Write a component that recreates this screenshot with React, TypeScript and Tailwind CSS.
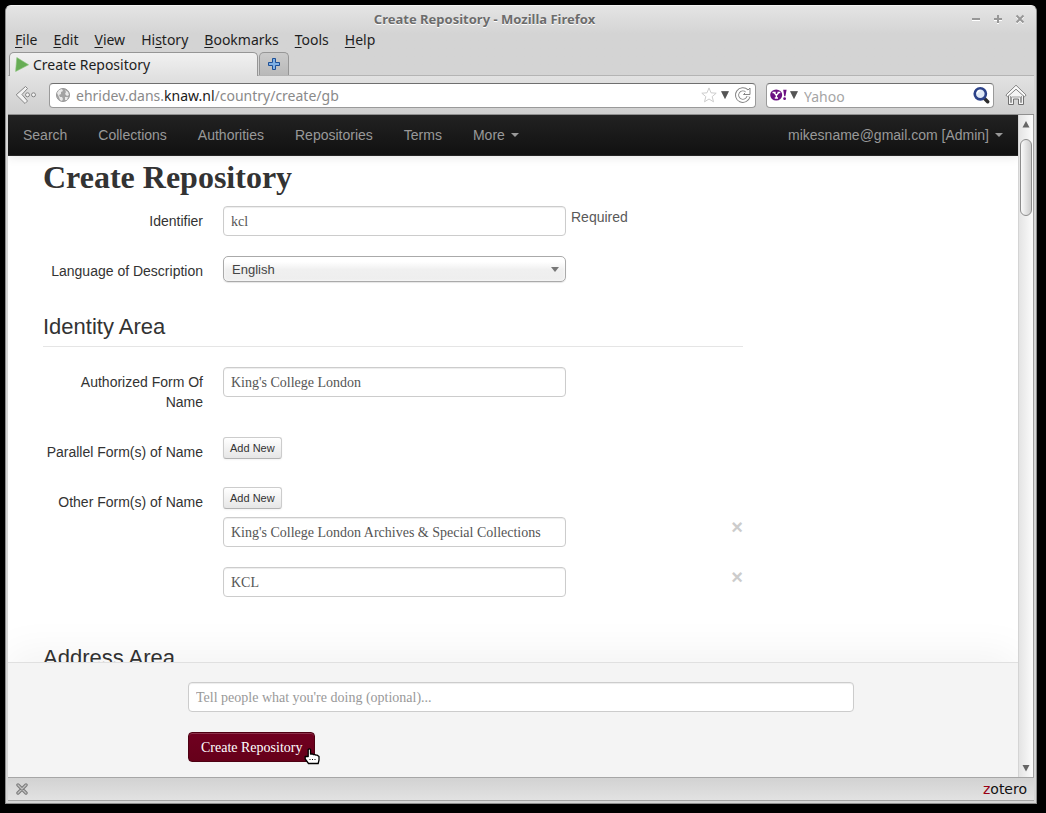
import type { ReactNode } from 'react';

const UI = "font-['Noto_Sans',sans-serif]";
const SANS = "font-['Liberation_Sans',Arial,sans-serif]";
const SERIF = "font-['Liberation_Serif','Times_New_Roman',serif]";

const fieldClass =
  "h-[30px] rounded-[4px] border border-[#ccc] bg-white px-[7px] pt-0.5 text-[14px] leading-5 text-[#555] shadow-[inset_0_1px_1px_rgba(0,0,0,0.075)] outline-none " +
  SERIF;

function Caret() {
  return (
    <svg width="8" height="4" viewBox="0 0 8 4" className="ml-1.5 shrink-0" aria-hidden="true">
      <path d="M0 0h8L4 4z" fill="#999" />
    </svg>
  );
}

function WindowButton({ label, d }: { label: string; d: string }) {
  return (
    <button type="button" aria-label={label} className="block">
      <svg width="10" height="10" viewBox="0 0 10 10" aria-hidden="true">
        <path d={d} stroke="#fff" strokeWidth="2" fill="none" transform="translate(0 1)" />
        <path d={d} stroke="#979797" strokeWidth="2" fill="none" />
      </svg>
    </button>
  );
}

function TitleBar() {
  return (
    <div className="grid h-6 shrink-0 grid-cols-[1fr_auto_1fr] items-center pl-0 pr-[9px] pt-0.5">
      <span />
      <span className={`pr-16 text-[13px] font-bold leading-5 text-[#6c6c6c] [text-shadow:0_1px_0_#fff] ${UI}`}>
        Create Repository - Mozilla Firefox
      </span>
      <div className="flex justify-end gap-3">
        <WindowButton label="Minimize" d="M1 5h8" />
        <WindowButton label="Maximize" d="M1 5h8M5 1v8" />
        <WindowButton label="Close" d="M1.5 1.5l7 7M8.500 1.500l-7 7" />
      </div>
    </div>
  );
}

const menus: [string, string, string][] = [
  ['', 'F', 'ile'],
  ['', 'E', 'dit'],
  ['', 'V', 'iew'],
  ['Hi', 's', 'tory'],
  ['', 'B', 'ookmarks'],
  ['', 'T', 'ools'],
  ['', 'H', 'elp'],
];

function MenuBar() {
  return (
    <div className={`flex h-[22px] shrink-0 items-center gap-4 px-[7px] pb-0.5 text-[14px] leading-5 text-[#1e1e1e] ${UI}`}>
      {menus.map(([before, key, after]) => (
        <button type="button" key={before + key + after}>
          {before}
          <span className="underline underline-offset-2">{key}</span>
          {after}
        </button>
      ))}
    </div>
  );
}

function TabStrip() {
  return (
    <div className="flex h-6 shrink-0 gap-px border-b border-[#b4b4b4] pl-px">
      <button
        type="button"
        className={`-mb-px flex w-[249px] items-center gap-1 rounded-t-[5px] border border-b-0 border-[#969696] bg-linear-to-b from-[#f1f1f1] to-[#e2e2e2] pl-[5px] text-[14px] leading-5 text-[#1e1e1e] ${UI}`}
      >
        <svg width="14" height="16" viewBox="0 0 14 16" className="shrink-0" aria-hidden="true">
          <path d="M1.800 .5L13.600 7.800L.6 14.500z" fill="#67ad55" stroke="#8cc47c" strokeWidth=".6" />
        </svg>
        Create Repository
      </button>
      <button
        type="button"
        aria-label="Open a new tab"
        className="flex w-[30px] items-center justify-center rounded-t-[5px] border border-b-0 border-[#969696] bg-linear-to-b from-[#cbcbcb] to-[#b9b9b9]"
      >
        <svg width="14" height="14" viewBox="0 0 14 14" aria-hidden="true">
          <path d="M5.500 1.500h3v4h4v3h-4v4h-3v-4h-4v-3h4z" fill="#7fb0e4" stroke="#1d4f96" />
        </svg>
      </button>
    </div>
  );
}

function DropArrow() {
  return (
    <svg width="8" height="8" viewBox="0 0 8 8" className="shrink-0" aria-hidden="true">
      <path d="M.5.500h7L4 7.500z" fill="#555" stroke="#444" strokeWidth=".6" />
    </svg>
  );
}

function Toolbar() {
  return (
    <div className={`flex h-[39px] shrink-0 items-center border-b border-[#8f8f8f] bg-linear-to-b from-[#e2e2e2] to-[#cfcfcf] pl-[7px] pr-[7px] text-[14px] ${UI}`}>
      <button type="button" aria-label="Back" className="mr-3 shrink-0">
        <svg width="22" height="20" viewBox="0 0 22 20" className="block" aria-hidden="true">
          <path d="M10.500 1.500l2 2L7 9.500l5.500 6.500-2.500 2.500L1.200 9.800z" fill="#f2f2f2" stroke="#858585" />
          <circle cx="12.500" cy="9.800" r="2" fill="#f2f2f2" stroke="#858585" />
          <circle cx="18.500" cy="9.800" r="2" fill="#f2f2f2" stroke="#858585" />
        </svg>
      </button>
      <div className="flex h-[25px] min-w-0 flex-1 items-center rounded-[4px] border border-[#9a9a9a] border-t-[#6f6f6f] bg-white pl-1.5 pr-1">
        <svg width="14" height="14" viewBox="0 0 14 14" className="mr-1.5 shrink-0" aria-hidden="true">
          <circle cx="7" cy="7" r="6.500" fill="#a3a3a3" stroke="#979797" />
          <path d="M1 5l2-3 3-1 1 2-2 1v2l-2 1 1 2 2 0 1 2-1 2-2-1-1-3zM9 2l3 2 1 3-2 1-2-2 1-2zM9 9l3 0-1 3-2 0z" fill="#e9e9e9" />
        </svg>
        <div className="min-w-0 flex-1 truncate pt-0.5 leading-5 text-[#8a8a8a]">
          ehridev.dans.<span className="text-[#1a1a1a]">knaw.nl</span>/country/create/gb
        </div>
        <button type="button" aria-label="Bookmark this page" className="mr-1 shrink-0">
          <svg width="16" height="16" viewBox="0 0 16 16" className="block" aria-hidden="true">
            <path d="M8 .9l2 4.900 5.200.4-4 3.400 1.300 5.200L8 12l-4.500 2.800 1.300-5.200-4-3.400L6 5.800z" fill="#fff" stroke="#cdcdcd" />
          </svg>
        </button>
        <button type="button" aria-label="Show history" className="mr-1.5 shrink-0">
          <DropArrow />
        </button>
        <button type="button" aria-label="Reload" className="shrink-0">
          <svg width="16" height="16" viewBox="0 0 16 16" className="block" aria-hidden="true">
            <path d="M13.500 9.500A5.800 5.800 0 1 1 12 4" fill="none" stroke="#858585" strokeWidth="4" />
            <path d="M8.500 7.500h6.500V1z" fill="#fff" stroke="#858585" />
            <path d="M13.500 9.500A5.800 5.800 0 1 1 12 4l-1 2.500" fill="none" stroke="#fff" strokeWidth="2.200" />
          </svg>
        </button>
      </div>
      <div className="ml-[10px] flex h-[25px] w-[228px] shrink-0 items-center rounded-[4px] border border-[#9a9a9a] border-t-[#6f6f6f] bg-white pl-[3px] pr-[3px]">
        <svg width="18" height="14" viewBox="0 0 18 14" className="mr-0.5 shrink-0" aria-hidden="true">
          <ellipse cx="6.200" cy="7" rx="6" ry="5.500" fill="#6b0f82" />
          <path d="M2.500 4.500h3.200M7.500 4.500h2.800M4 4.500l2.400 3 2.400-3M6.400 7.500v2.500M4.800 10h3.200" stroke="#fff" strokeWidth="1.300" fill="none" />
          <path d="M13.200 1.800h3.400l-1.200 6.400h-1.200z" fill="#6b0f82" />
          <circle cx="14.600" cy="10.700" r="1.400" fill="#6b0f82" />
        </svg>
        <DropArrow />
        <input
          aria-label="Search using Yahoo"
          placeholder="Yahoo"
          className="ml-1 h-[22px] min-w-0 flex-1 px-0.5 pt-0.5 leading-5 outline-none placeholder:text-[#a5a5a5]"
        />
        <button type="button" aria-label="Search" className="shrink-0">
          <svg width="18" height="18" viewBox="0 0 18 18" className="block" aria-hidden="true">
            <path d="M12.500 12.500l3.200 3.200" stroke="#2c2c2c" strokeWidth="3.400" strokeLinecap="round" />
            <circle cx="8.300" cy="7.800" r="5.600" fill="#dfe8f6" stroke="#2c4289" strokeWidth="2.600" />
            <path d="M5.300 7.500a3 3 0 0 1 3-3" fill="none" stroke="#fff" strokeWidth="1.300" />
          </svg>
        </button>
      </div>
      <button type="button" aria-label="Home" className="ml-[11px] shrink-0">
        <svg width="22" height="22" viewBox="0 0 22 22" className="block" aria-hidden="true">
          <path d="M3.500 11v9.500h5v-5.500h5v5.500h5V11L11 4.500z" fill="#f4f4f4" stroke="#707070" />
          <path d="M5.500 12v6.500h1V13h9v5.500h1V12" fill="none" stroke="#9d9d9d" />
          <path d="M11 1.200L.9 11l1.600 1.800L11 5.200l8.500 7.600L21.100 11z" fill="#fafafa" stroke="#858585" />
        </svg>
      </button>
    </div>
  );
}

const links = ['Search', 'Collections', 'Authorities', 'Repositories', 'Terms'];

function NavBar() {
  return (
    <nav
      className={`relative z-10 flex h-[41px] shrink-0 items-center border-b border-[#252525] bg-linear-to-b from-[#222] to-[#111] px-[15px] text-[14px] leading-5 text-[#999] shadow-[0_1px_10px_rgba(0,0,0,0.1)] ${SANS}`}
    >
      <div className="flex gap-[31px]">
        {links.map((l) => (
          <a href="#" key={l}>
            {l}
          </a>
        ))}
        <a href="#" className="flex items-center">
          More
          <Caret />
        </a>
      </div>
      <a href="#" className="ml-auto flex items-center">
        mikesname@gmail.com [Admin]
        <Caret />
      </a>
    </nav>
  );
}

function Group({ label, htmlFor, children }: { label: string; htmlFor: string; children: ReactNode }) {
  return (
    <div className="mb-5 flex gap-5">
      <label htmlFor={htmlFor} className="w-40 shrink-0 py-[5px] text-right">
        {label}
      </label>
      <div className="min-w-0 flex-1">{children}</div>
    </div>
  );
}

function Legend({ children }: { children: ReactNode }) {
  return <h2 className="mb-5 border-b border-[#e5e5e5] pt-0.5 text-[22px] leading-[38px]">{children}</h2>;
}

function AddNew({ id }: { id: string }) {
  return (
    <button
      id={id}
      type="button"
      className="block h-[22px] rounded-[3px] border border-[#ccc] border-b-[#b3b3b3] bg-linear-to-b from-white to-[#e6e6e6] px-1.5 text-[11px] leading-5 text-[#333] shadow-[0_1px_2px_rgba(0,0,0,0.05)]"
    >
      Add New
    </button>
  );
}

const otherNames = ["King's College London Archives & Special Collections", 'KCL'];

function RepositoryForm() {
  return (
    <form className={`w-full max-w-[735px] pl-[35px] text-[14px] leading-5 text-[#333] ${SANS}`}>
      <h1 className={`mb-[9px] pt-px text-[32px] font-bold leading-[40px] ${SERIF}`}>Create Repository</h1>
      <Group label="Identifier" htmlFor="identifier">
        <div className="flex gap-[5px]">
          <input id="identifier" defaultValue="kcl" className={`w-[343px] ${fieldClass}`} />
          <span className="pt-px text-[#595959]">Required</span>
        </div>
      </Group>
      <Group label="Language of Description" htmlFor="language">
        <div className="relative w-[343px]">
          <select
            id="language"
            className="block h-[26px] w-full appearance-none rounded-[5px] border border-[#aaa] bg-linear-to-b from-white from-20% via-[#f0f0f0] via-52% to-[#eee] px-2 pt-0.5 text-[13px] leading-[22px] text-[#444] shadow-[inset_0_0_3px_#fff,0_1px_1px_rgba(0,0,0,0.1)] outline-none"
          >
            <option>English</option>
          </select>
          <svg width="8" height="5" viewBox="0 0 8 5" className="pointer-events-none absolute right-[7px] top-[11px]" aria-hidden="true">
            <path d="M0 0h8L4 5z" fill="#777" />
          </svg>
        </div>
      </Group>
      <Legend>Identity Area</Legend>
      <Group label="Authorized Form Of Name" htmlFor="authorized">
        <input id="authorized" defaultValue="King's College London" className={`block w-[343px] ${fieldClass}`} />
      </Group>
      <Group label="Parallel Form(s) of Name" htmlFor="parallel">
        <AddNew id="parallel" />
      </Group>
      <Group label="Other Form(s) of Name" htmlFor="other">
        <AddNew id="other" />
        <div className="mt-2">
          {otherNames.map((name) => (
            <div key={name} className="mb-5 flex justify-between">
              <input aria-label="Other form of name" defaultValue={name} className={`w-[343px] ${fieldClass}`} />
              <button type="button" aria-label={`Remove ${name}`} className="h-5 text-[20px] font-bold leading-5 text-[#ccc]">
                ×
              </button>
            </div>
          ))}
        </div>
      </Group>
      <Legend>Address Area</Legend>
    </form>
  );
}

function HandCursor() {
  return (
    <svg width="17" height="17" viewBox="0 0 17 17" className="pointer-events-none absolute -bottom-[3px] -right-1.5" aria-hidden="true">
      <path
        d="M4.200 1.500q1.300-1.200 2.300 0V6h2l1 .6h1.500l1 .6h1.300l1.700 1.300V12l-.8 3.500H4.500L1.200 11V8.500h3z"
        fill="#fff"
        stroke="#000"
        strokeWidth="1.300"
        strokeLinejoin="round"
      />
      <path d="M5.500 11.500h1M8 11.500h1M10.500 11.500h1" stroke="#000" />
    </svg>
  );
}

function SubmitPanel() {
  return (
    <div className="relative z-10 shrink-0 border-t border-[#e0e0e0] bg-[#f4f4f4] pb-[15px] pl-[180px] pr-4 pt-[19px] shadow-[0_-10px_40px_rgba(0,0,0,0.05)]">
      <input
        aria-label="Log message"
        placeholder="Tell people what you're doing (optional)..."
        className={`block w-full max-w-[666px] placeholder:text-[#999] ${fieldClass}`}
      />
      <div className="relative mt-5 w-fit">
        <button
          type="button"
          className={`block h-[30px] rounded-[4px] border border-[#4d0012] bg-linear-to-b from-[#700020] to-[#66001a] px-3 pt-0.5 text-[14px] leading-5 text-white shadow-[inset_0_1px_0_rgba(255,255,255,0.2)] ${SERIF}`}
        >
          Create Repository
        </button>
        <HandCursor />
      </div>
    </div>
  );
}

function ScrollBar() {
  return (
    <div className="flex w-4 shrink-0 flex-col items-center border-l border-r border-l-[#d4d4d4] border-r-[#a0a0a0] bg-linear-to-r from-[#e4e4e4] to-[#fcfcfc] pb-[5px] pt-1.5">
      <svg width="8" height="7" viewBox="0 0 8 7" aria-hidden="true">
        <path d="M4 0l3.500 6.500h-7z" fill="#666" />
      </svg>
      <div className="mt-[11px] h-[77px] w-3 rounded-full border border-[#8c8c8c] bg-linear-to-r from-[#fafafa] to-[#cdcdcd]" />
      <svg width="8" height="7" viewBox="0 0 8 7" className="mt-auto" aria-hidden="true">
        <path d="M4 6.500L.5 0h7z" fill="#666" />
      </svg>
    </div>
  );
}

function StatusBar() {
  return (
    <div className="flex h-6 shrink-0 items-center justify-between border-y border-[#a6a6a6] bg-linear-to-b from-[#d2d2d2] to-[#e2e2e2] pl-2 pr-[7px]">
      <button type="button" aria-label="Close add-on bar">
        <svg width="12" height="12" viewBox="0 0 12 12" className="block" aria-hidden="true">
          <path d="M2 2l8 8M10 2l-8 8" stroke="#7a7a7a" strokeWidth="3.400" strokeLinecap="round" />
          <path d="M2 2l8 8M10 2l-8 8" stroke="#c2c2c2" strokeWidth="1.300" strokeLinecap="round" />
        </svg>
      </button>
      <a href="#" className="font-['DejaVu_Sans',sans-serif] text-[14px] leading-5 text-[#111]">
        <span className="text-[#990014]">z</span>otero
      </a>
    </div>
  );
}

export default function App() {
  return (
    <div className="flex h-screen bg-black pb-[9px] pl-[5px] pr-[9px] pt-[5px]">
      <div className="flex min-w-0 flex-1 flex-col rounded-t-[6px] border border-[#8e8e8e] border-t-[#f2f2f2] bg-[#d6d6d6] px-0.5 pb-0.5">
        <div className="-mx-0.5 flex shrink-0 flex-col rounded-t-[5px] bg-linear-to-b from-[#e4e4e4] to-[#d4d4d4] to-40% px-0.5">
          <TitleBar />
          <MenuBar />
          <TabStrip />
        </div>
        <Toolbar />
        <div className="flex min-h-0 flex-1">
          <div className="flex min-w-0 flex-1 flex-col overflow-hidden bg-white">
            <NavBar />
            <div className="min-h-0 flex-1 overflow-hidden">
              <RepositoryForm />
            </div>
            <SubmitPanel />
          </div>
          <ScrollBar />
        </div>
        <StatusBar />
      </div>
    </div>
  );
}
